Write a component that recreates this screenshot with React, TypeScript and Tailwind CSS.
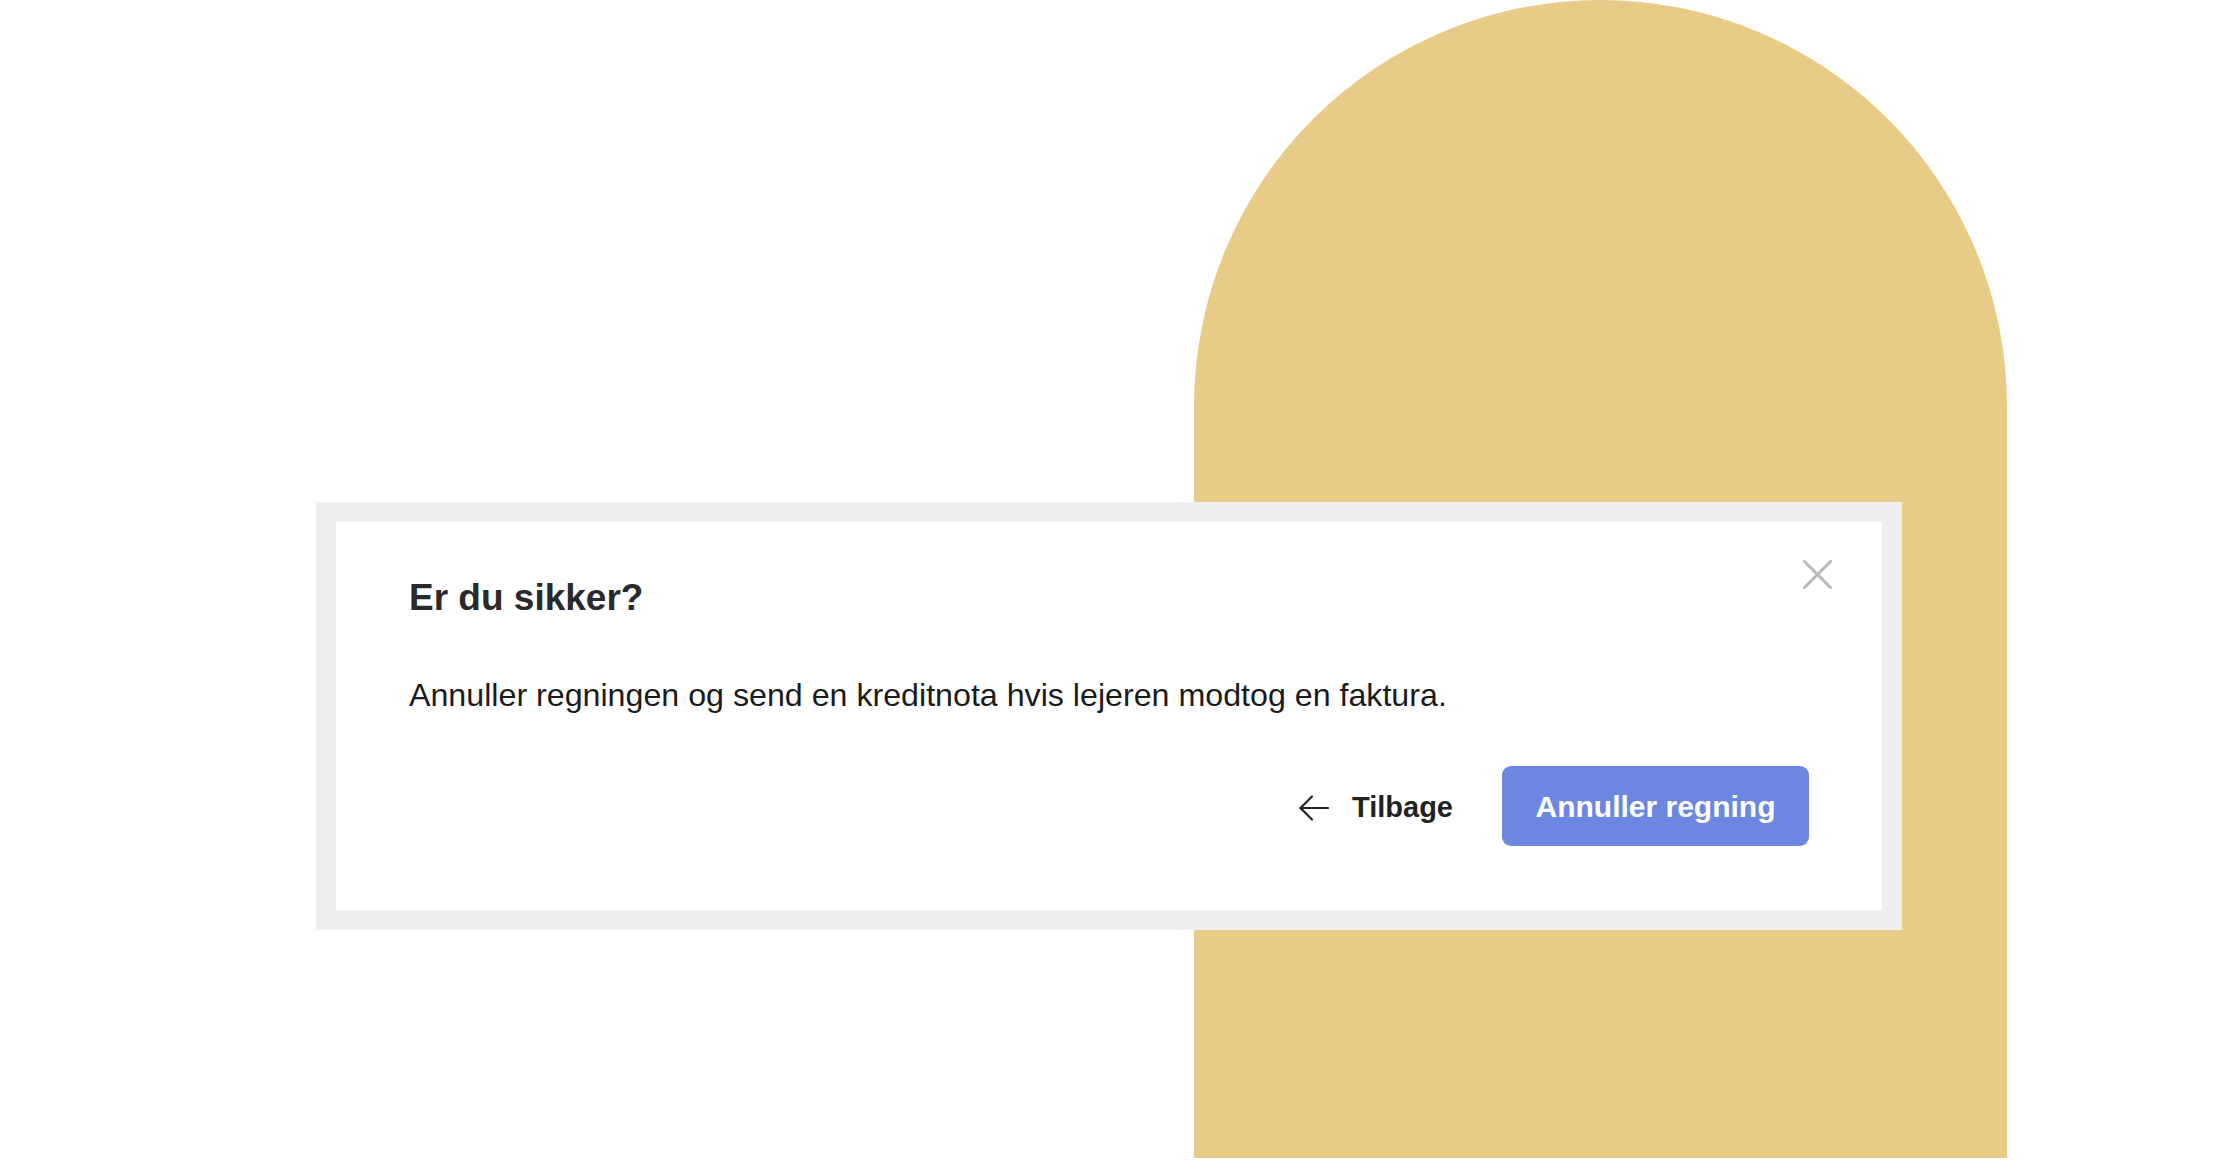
const font = { fontFamily: '"Liberation Sans", Arial, sans-serif' };

function ArrowLeftThin() {
  return (
    <svg width="30" height="26" viewBox="0 0 30 26" fill="none" stroke="#222222" strokeWidth="2.2" strokeLinecap="round" strokeLinejoin="round">
      <path d="M29 13H1.5" />
      <path d="M13 1.5L1.5 13L13 24.5" />
    </svg>
  );
}

function CloseIcon() {
  return (
    <svg width="29" height="29" viewBox="0 0 29 29" fill="none" stroke="#b8b8b8" strokeWidth="3" strokeLinecap="round">
      <path d="M1.5 1.5L27.5 27.5" />
      <path d="M27.5 1.5L1.5 27.5" />
    </svg>
  );
}

export default function App() {
  return (
    <div className="relative w-[2220px] h-[1160px] bg-white overflow-hidden" style={font}>
      {/* Arch backdrop */}
      <div className="pl-[1194px]">
        <div className="w-[813px] h-[1158px] rounded-t-[406.5px] bg-[#e8cb86]" />
      </div>

      {/* Dialog */}
      <div className="absolute left-[316px] top-[502px] w-[1586px] h-[428px] border-[20px] border-[#eeeeee] bg-white">
        <div className="relative h-full px-[73px] pt-[57px]">
          <button className="absolute top-[38px] right-[50px] flex">
            <CloseIcon />
          </button>

          <h2 className="text-[37px] leading-none font-bold text-[#2a2a2a]">Er du sikker?</h2>
          <p className="mt-[63px] text-[32.2px] leading-none text-[#1b1b1b]">
            Annuller regningen og send en kreditnota hvis lejeren modtog en faktura.
          </p>

          <div className="mt-[55px] flex items-center justify-end">
            <button className="flex items-center gap-[23px] text-[29px] font-bold text-[#222222] pt-[3px]">
              <ArrowLeftThin />
              <span>Tilbage</span>
            </button>
            <button className="ml-[49px] w-[307px] h-[80px] rounded-[9px] bg-[#6b87e2] text-white text-[30px] font-bold flex items-center justify-center">
              Annuller regning
            </button>
          </div>
        </div>
      </div>
    </div>
  );
}
